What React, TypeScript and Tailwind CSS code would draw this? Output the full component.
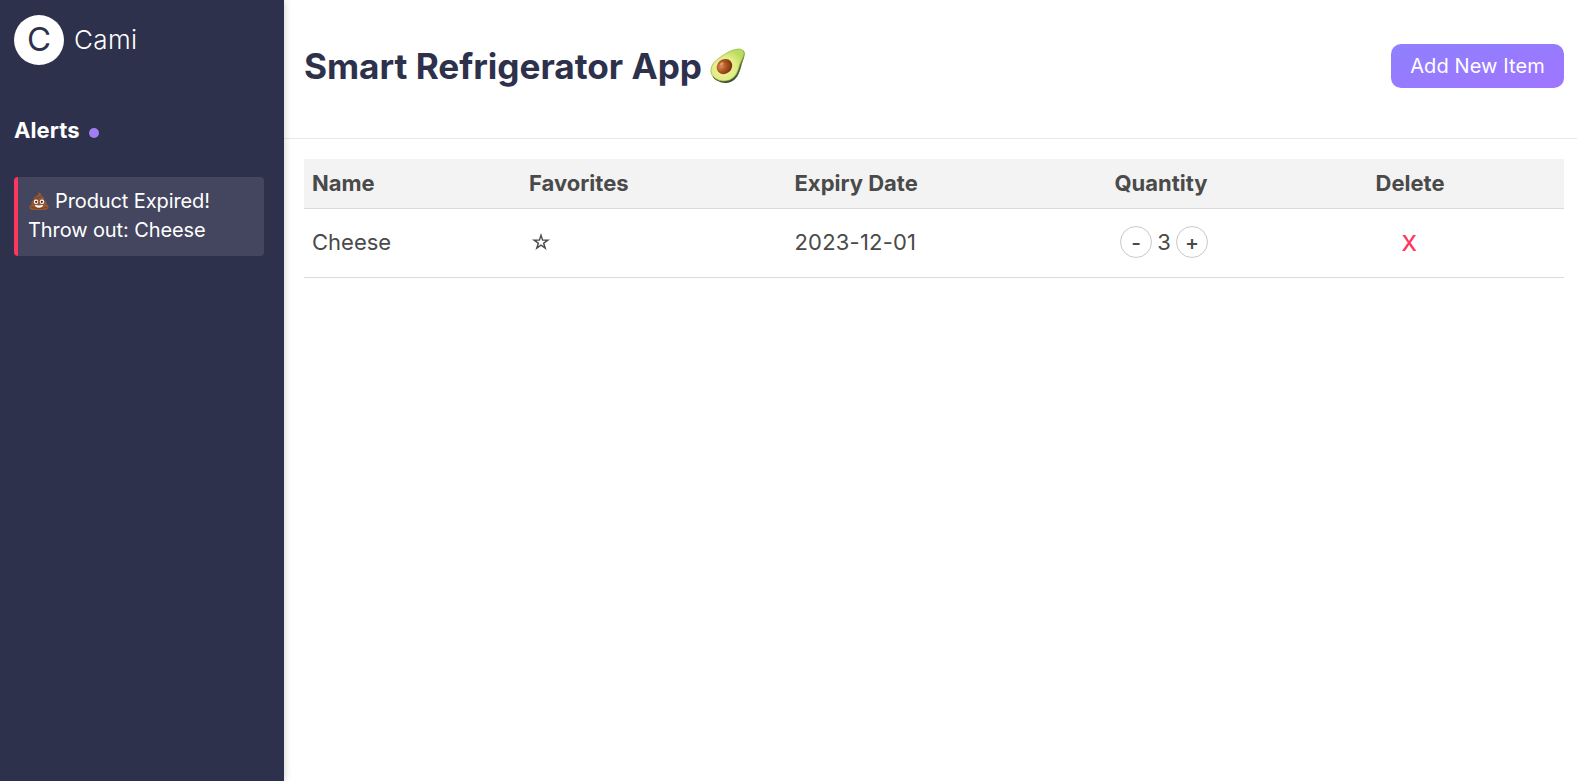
function Avocado() {
  return (
    <svg viewBox="0 0 36 36" className="h-9 w-9 shrink-0" aria-hidden="true">
      <defs>
        <linearGradient id="skin" x1="0.8" y1="0" x2="0.5" y2="1">
          <stop offset="0" stopColor="#6f8a3a" />
          <stop offset="1" stopColor="#3d4532" />
        </linearGradient>
        <radialGradient id="flesh" cx="0.4" cy="0.6" r="0.62">
          <stop offset="0" stopColor="#f6f3a4" />
          <stop offset="0.6" stopColor="#e0ec84" />
          <stop offset="1" stopColor="#b9dc5c" />
        </radialGradient>
        <radialGradient id="pit" cx="0.36" cy="0.34" r="0.7">
          <stop offset="0" stopColor="#dc8e5b" />
          <stop offset="0.45" stopColor="#b05822" />
          <stop offset="1" stopColor="#752f0c" />
        </radialGradient>
      </defs>
      <path d="M33 2.200c2.200 1.200 2 5 .8 8.200-2 4.600-2.400 8.600-4.300 13.300C27.300 30 22.500 35 15.600 34.900 10 34.800 5 32.400 2.500 28.500z" fill="url(#skin)" />
      <path d="M28.200 1.100c3.200-.3 6 1.200 5.800 4.800-.3 3.500-3 6.800-4.400 11-1.300 4.200-2.100 8.500-5.400 11.900-3.400 3.500-8.300 5-13.500 3.900C5 31.500.7 27.600.9 22.200c.3-5 3.400-8.800 8-12C14.100 6.700 20 1.900 28.200 1.100z" fill="url(#flesh)" stroke="#8bb53a" strokeWidth="0.700" />
      <ellipse cx="14.400" cy="18.600" rx="8.200" ry="7.200" transform="rotate(-40 14.400 18.600)" fill="url(#pit)" />
      <ellipse cx="11.800" cy="15.800" rx="1.800" ry="1.200" transform="rotate(-35 11.800 15.800)" fill="#f0b083" opacity="0.800" />
    </svg>
  );
}

function Poo() {
  return (
    <svg viewBox="0 0 20 20" className="ml-px mr-[6px] inline-block h-5 w-5 align-[-3px]" aria-hidden="true">
      <path d="M9.300.6c.4 1.400 3.300 1.600 3.200 4.300 2.100.6 3.100 2.300 2.500 4.300 2.100.7 3 2.400 2.500 4.100 1.700.6 2.300 1.900 2 3.300-.4 1.700-2 2.300-4 2.300H4.300c-2.300 0-3.800-.7-3.900-2.500-.1-1.500.6-2.700 2.200-3.200-.6-2 .3-3.500 2.200-4.100C4.400 6.900 5.500 5.500 7.300 5c2-.6 2.700-2.400 2-4.400z" fill="#955731" />
      <path d="M6 6.800c2 .7 4.300.2 6-1.300M4 11c1-.9 2.300-1.400 3.500-1.600M2 15.700c2.800 2.200 12.700 2.300 16 .2" stroke="#6d391c" strokeWidth="0.800" fill="none" />
      <circle cx="7" cy="10.700" r="2.200" fill="#fff" />
      <circle cx="13" cy="10.700" r="2.200" fill="#fff" />
      <circle cx="7.200" cy="10.800" r="1.100" fill="#2d201c" />
      <circle cx="12.800" cy="10.800" r="1.100" fill="#2d201c" />
      <path d="M5.800 14.100c2.500.6 5.900.6 8.400 0-.6 3.400-7.600 3.700-8.400 0z" fill="#fff" />
    </svg>
  );
}

function Star() {
  return (
    <svg viewBox="0 0 20 20" className="ml-[2px] h-5 w-5" aria-hidden="true">
      <path
        fillRule="evenodd"
        d="M10 1l2.100 6.400H19l-5.500 4.100 2.100 6.500L10 14l-5.600 4 2.100-6.500L1 7.400h6.900zM10 5.400L8.900 8.800H5.400l2.800 2.100-1 3.400L10 12.200l2.800 2.100-1-3.400 2.800-2.100h-3.500z"
        fill="#4a4a4a"
      />
    </svg>
  );
}

const COLUMNS = "grid grid-cols-[217px_265.5px_320px_261px_196.5px]";
const ROUND =
  "flex h-8 w-8 items-center justify-center rounded-full border border-[#c9c9c9] bg-white text-[21px] font-medium leading-none";

export default function App() {
  return (
    <div className="flex h-[781px] w-full overflow-hidden bg-white font-['Inter',sans-serif] text-[#4a4a4a]">
      <aside className="z-10 w-[284px] shrink-0 bg-[#2d314b] px-[14px] pt-[15px] text-white shadow-[0_0_8px_rgba(0,0,0,0.2)]">
        <div className="flex items-center gap-[10px]">
          <div className="flex h-[50px] w-[50px] items-center justify-center rounded-full bg-white pb-px text-[33px] leading-none text-[#2d314b]">
            C
          </div>
          <span className="pb-px text-[26px] font-light leading-[30px] tracking-[0.400px]">Cami</span>
        </div>
        <div className="mt-[49px] flex h-8 items-center">
          <h2 className="text-[22px] font-bold leading-8 tracking-[0.100px]">Alerts</h2>
          <span className="ml-[9px] mt-[6px] h-[10px] w-[10px] rounded-full bg-[#9f7ff0]" />
        </div>
        <div className="mt-[31px] h-[79px] w-[250px] rounded border-l-4 border-[#ff375f] bg-[#43465e] pl-[10px] pt-[10px] text-[20px] leading-[29px] tracking-[-0.100px]">
          <p className="whitespace-nowrap">
            <Poo />
            Product Expired!
          </p>
          <p>Throw out: Cheese</p>
        </div>
      </aside>

      <main className="flex min-w-0 flex-1 flex-col">
        <header className="flex h-[139px] items-start justify-between border-b border-[#e8e8e8] pl-5 pr-[13px] pt-11">
          <h1 className="flex items-center gap-[8px] whitespace-nowrap text-[35.200px] font-bold leading-[44px] tracking-[-0.020px] text-[#2d314b]">
            Smart Refrigerator App
            <Avocado />
          </h1>
          <button className="h-11 w-[173px] rounded-[10px] bg-gradient-to-br from-[#8f80ff] to-[#9f75ff] text-[20px] tracking-[0.100px] text-white">
            Add New Item
          </button>
        </header>

        <section className="ml-5 mr-[13px] mt-5 text-[22px]">
          <div className={`${COLUMNS} h-[50px] items-center border-b border-[#dbdbdb] bg-[#f3f3f3] font-bold`}>
            <div className="pl-2">Name</div>
            <div className="pl-2">Favorites</div>
            <div className="pl-2">Expiry Date</div>
            <div className="pl-2">Quantity</div>
            <div className="pl-2">Delete</div>
          </div>
          <div className={`${COLUMNS} h-[69px] items-center border-b border-[#dbdbdb] pb-[2px]`}>
            <div className="pl-2">Cheese</div>
            <div className="pl-2">
              <Star />
            </div>
            <div className="pl-2 tracking-[0.200px]">2023-12-01</div>
            <div className="flex items-center pl-[13.500px]">
              <button className={ROUND}>-</button>
              <span className="w-6 text-center">3</span>
              <button className={ROUND}>+</button>
            </div>
            <div className="pl-[34px] pt-[2px] font-medium text-[#ff375f]">X</div>
          </div>
        </section>
      </main>
    </div>
  );
}
